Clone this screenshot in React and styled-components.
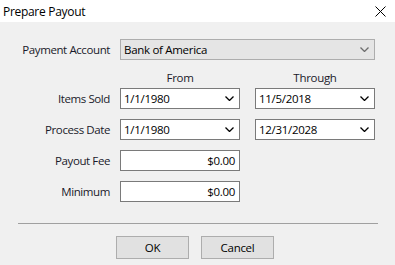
import React from 'react'
import styled, { createGlobalStyle } from 'styled-components'

const Global = createGlobalStyle`
    html, body {
        margin: 0;
        padding: 0;
        background: #f0f0f0;
    }
    body {
        font-family: "Open Sans", "Noto Sans", sans-serif;
        font-size: 11.5px;
        color: #000;
    }
`

const Window = styled.div`
    width: 395px;
    height: 265px;
    background: #f0f0f0;
    display: flex;
    flex-direction: column;
    overflow: hidden;
`
const TitleBar = styled.div`
    height: 22px;
    background: #fff;
    display: flex;
    align-items: center;
    justify-content: space-between;
    padding: 0 9px 0 3px;
`
const Title = styled.div`
    font-size: 12px;
    color: #000;
    letter-spacing: -0.3px;
`
const Close = styled.div`
    width: 11px;
    height: 11px;
    display: flex;
`
const Form = styled.div`
    padding-top: 17px;
    display: grid;
    grid-template-columns: 120px 120px 135px;
    align-items: center;
`
const Label = styled.div`
    grid-column: 1;
    text-align: right;
    padding-right: 10px;
    margin-top: ${p => p.top || 0}px;
    color: #1a1a2a;
    white-space: nowrap;
    letter-spacing: -0.4px;
`
const ColHead = styled.div`
    text-align: center;
    margin-top: ${p => p.top || 0}px;
    margin-left: ${p => p.col3 ? 15 : 0}px;
    height: 17px;
    line-height: 17px;
    color: #1a1a2a;
    letter-spacing: -0.3px;
`
const Box = styled.div`
    box-sizing: border-box;
    height: 21px;
    margin-top: ${p => p.top || 0}px;
    margin-left: ${p => p.col3 ? 15 : 0}px;
    grid-column: ${p => p.span ? '2 / 4' : 'auto'};
    background: ${p => p.disabled ? '#e5e5e5' : '#fff'};
    border: 1px solid ${p => p.disabled ? '#adadad' : '#7a7a7a'};
    display: flex;
    align-items: center;
    justify-content: ${p => p.right ? 'flex-end' : 'space-between'};
    padding: 0 ${p => p.right ? 4 : 5}px 0 3px;
    white-space: nowrap;
    letter-spacing: -0.3px;
    color: #000;
`
const Spacer = styled.div`
    grid-column: 1;
`
const Chevron = styled.svg`
    width: 9px;
    height: 5px;
    flex-shrink: 0;
`
const Footer = styled.div`
    margin: 21px 17px 0 18px;
    border-top: 1px solid #a0a0a0;
    display: flex;
    justify-content: center;
    gap: 12px;
    padding-top: 12px;
    padding-right: 6px;
`
const Button = styled.div`
    box-sizing: border-box;
    width: 73px;
    height: 23px;
    background: #e1e1e1;
    border: 1px solid #adadad;
    display: flex;
    align-items: center;
    justify-content: center;
    color: #000;
    letter-spacing: -0.3px;
`

const Arrow = ({ color }) => (
    <Chevron viewBox="0 0 9 5">
        <path d="M0.5 0.5 L4.5 4.5 L8.5 0.5" fill="none" stroke={color} strokeWidth="1.3" />
    </Chevron>
)

const Select = ({ value, top, disabled, span, col3 }) => (
    <Box top={top} disabled={disabled} span={span} col3={col3}>
        <span>{value}</span>
        <Arrow color={disabled ? '#6d6d6d' : '#000'} />
    </Box>
)

const App = () => {
    return (
        <Window>
            <Global />
            <TitleBar>
                <Title>Prepare Payout</Title>
                <Close>
                    <svg width="11" height="11" viewBox="0 0 11 11">
                        <path d="M0.5 0.5 L10.5 10.5 M10.5 0.5 L0.5 10.5" stroke="#000" strokeWidth="1" />
                    </svg>
                </Close>
            </TitleBar>
            <Form>
                <Label>Payment Account</Label>
                <Select value="Bank of America" disabled span />

                <Spacer />
                <ColHead top={9}>From</ColHead>
                <ColHead top={9} col3>Through</ColHead>

                <Label top={2}>Items Sold</Label>
                <Select top={2} value="1/1/1980" />
                <Select top={2} value="11/5/2018" col3 />

                <Label top={10}>Process Date</Label>
                <Select top={10} value="1/1/1980" />
                <Select top={10} value="12/31/2028" col3 />

                <Label top={10}>Payout Fee</Label>
                <Box top={10} right>$0.00</Box>
                <Spacer />

                <Label top={10}>Minimum</Label>
                <Box top={10} right>$0.00</Box>
                <Spacer />
            </Form>
            <Footer>
                <Button>OK</Button>
                <Button>Cancel</Button>
            </Footer>
        </Window>
    )
}

export default App
